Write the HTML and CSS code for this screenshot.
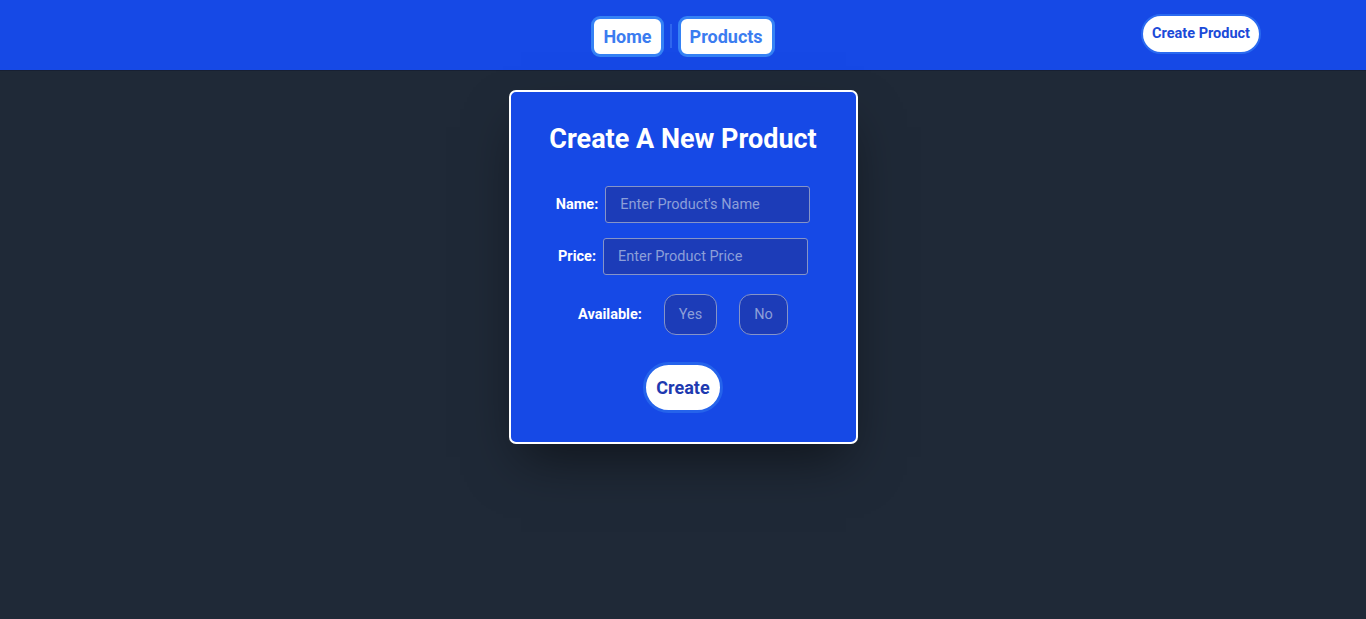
FILE: index.html
```html
<!DOCTYPE html>
<html lang="en">
<head>
<meta charset="utf-8">
<title>Create Product</title>
<link rel="stylesheet" href="styles.css">
</head>
<body>
<header class="header">
  <div class="spacer"></div>
  <nav class="nav">
    <a class="nav-btn" href="#">Home</a>
    <span class="divider"></span>
    <a class="nav-btn" href="#">Products</a>
  </nav>
  <div class="right">
    <a class="cta" href="#">Create Product</a>
  </div>
</header>
<main class="main">
  <form class="card">
    <h1 class="title">Create A New Product</h1>
    <div class="row">
      <label class="label">Name:</label>
      <input class="input" type="text" placeholder="Enter Product's Name">
    </div>
    <div class="row row-price">
      <label class="label">Price:</label>
      <input class="input" type="text" placeholder="Enter Product Price">
    </div>
    <div class="row row-avail">
      <span class="label">Available:</span>
      <button type="button" class="opt">Yes</button>
      <button type="button" class="opt">No</button>
    </div>
    <button type="button" class="submit">Create</button>
  </form>
</main>
</body>
</html>
```

FILE: styles.css
```css
* { box-sizing: border-box; }
html, body { margin: 0; padding: 0; }
body {
  background: #1f2937;
  font-family: Roboto, "Liberation Sans", sans-serif;
  min-height: 619px;
}
.header {
  height: 71px;
  background: #1649e6;
  display: grid;
  grid-template-columns: 1fr auto 1fr;
  align-items: center;
  border-bottom: 1px solid #172033;
}
.nav {
  display: flex;
  align-items: center;
  gap: 6px;
  margin-top: 2px;
}
.nav-btn {
  display: block;
  height: 41px;
  line-height: 35px;
  padding: 0 9px;
  background: #fff;
  border: 3px solid #3582f5;
  border-radius: 9px;
  color: #3b7cf0;
  font-weight: 700;
  font-size: 18px;
  text-decoration: none;
}
.divider {
  width: 2px;
  height: 24px;
  background: #2f66ee;
}
.right {
  display: flex;
  justify-content: flex-end;
  padding-right: 105px;
}
.cta {
  display: block;
  height: 40px;
  line-height: 36px;
  padding: 0 9px;
  background: #fff;
  border: 2px solid #2a6af0;
  border-radius: 20px;
  color: #1b4ad8;
  font-weight: 700;
  font-size: 14.5px;
  text-decoration: none;
  margin-top: -3px;
}
.main {
  display: flex;
  justify-content: center;
  padding-top: 19px;
}
.card {
  width: 349px;
  background: #1649e6;
  border: 2px solid #fff;
  border-radius: 7px;
  box-shadow: 0 25px 50px -12px rgba(0,0,0,0.5);
  padding: 31px 0 29px;
  display: flex;
  flex-direction: column;
  align-items: center;
}
.title {
  margin: 0 0 30px;
  font-size: 27px;
  line-height: 33px;
  font-weight: 700;
  color: #fff;
}
.row {
  display: flex;
  align-items: center;
  gap: 7px;
}
.row-price { margin-top: 15px; }
.row-avail { margin-top: 19px; gap: 22px; }
.label {
  color: #fff;
  font-weight: 700;
  font-size: 14.5px;
}
.input {
  width: 205px;
  height: 37px;
  background: #1c3cb8;
  border: 1px solid #8594c8;
  border-radius: 3px;
  padding: 0 0 0 14px;
  color: #fff;
  font-family: inherit;
  font-size: 14.5px;
  outline: none;
}
.input::placeholder { color: #8c9fd8; }
.opt {
  height: 41px;
  padding: 0 14px;
  background: #1c3cb8;
  border: 1px solid #8594c8;
  border-radius: 12px;
  color: #8c9fd8;
  font-family: inherit;
  font-size: 14.5px;
}
.submit {
  margin-top: 27px;
  height: 51px;
  padding: 0 10px;
  background: #fff;
  border: 3px solid #2563eb;
  border-radius: 26px;
  color: #1e3ab0;
  font-family: inherit;
  font-weight: 700;
  font-size: 18px;
}
```
